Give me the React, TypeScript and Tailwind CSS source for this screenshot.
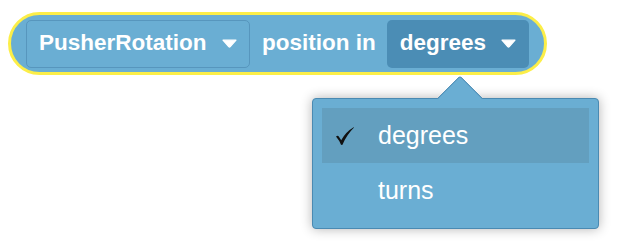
import React from "react";

function Caret() {
  return (
    <svg width="15" height="9" viewBox="0 0 15 9" className="shrink-0">
      <path d="M1 1.2 L14 1.2 L8.3 7.6 Q7.5 8.4 6.7 7.6 Z" fill="#ffffff" stroke="#ffffff" strokeWidth="1.2" strokeLinejoin="round" />
    </svg>
  );
}

function Check() {
  return (
    <svg width="20" height="20" viewBox="0 0 20 20" className="shrink-0">
      <path
        d="M1 10.5 Q2.6 9.4 3.6 10.2 L6.2 14.2 Q10.5 6 18.6 1.2 Q19.2 1.1 18.8 1.8 Q12 8.5 7.6 18.4 Q6.8 19.6 5.9 18.6 Q4.4 14.5 1 10.5 Z"
        fill="#111111"
      />
    </svg>
  );
}

export default function App() {
  return (
    <div className="relative w-[620px] h-[250px] bg-white overflow-hidden" style={{ fontFamily: '"Liberation Sans", Arial, sans-serif' }}>
      <div className="pt-[12px] pl-[8px]">
        <div className="inline-flex items-center h-[63px] w-[539px] rounded-full border-[3px] border-[#fcee48] bg-[#6aaed3] pl-[15px] text-white font-bold text-[22.5px]">
          <div className="flex items-center justify-between h-[48px] w-[224px] rounded-[5px] border border-[#5796bd] pl-[12px] pr-[12px]">
            <span className="leading-none">PusherRotation</span>
            <Caret />
          </div>
          <span className="ml-[12px] leading-none">position in</span>
          <div className="ml-[11px] flex items-center justify-between h-[48px] w-[142px] rounded-[5px] bg-[#4b8db5] pl-[13px] pr-[13px]">
            <span className="leading-none">degrees</span>
            <Caret />
          </div>
        </div>
      </div>

      <div className="absolute left-[312px] top-[98px] w-[287px] h-[131px] rounded-[4px] border border-[#4a8ab2] bg-[#6aaed3] shadow-[0_0_12px_rgba(0,0,0,0.3)] p-[9px] text-white text-[25px]">
        <div className="absolute left-[131px] top-[-17px] w-[32px] h-[32px] rotate-45 rounded-tl-[3px] border-t border-l border-[#4a8ab2] bg-[#6aaed3]" />
        <div className="relative flex items-center h-[55px] bg-[#639fbf]">
          <span className="w-[56px] pl-[13px] flex items-center">
            <Check />
          </span>
          <span className="leading-none">degrees</span>
        </div>
        <div className="relative flex items-center h-[55px]">
          <span className="w-[56px]" />
          <span className="leading-none">turns</span>
        </div>
      </div>
    </div>
  );
}
